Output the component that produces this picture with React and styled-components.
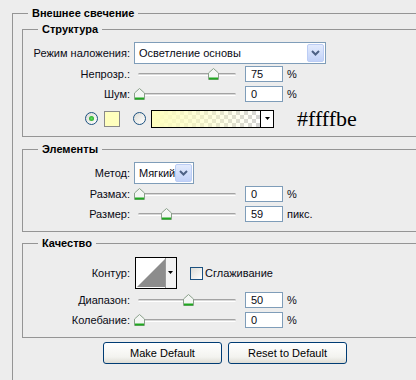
import React from 'react';
import styled, { createGlobalStyle } from 'styled-components';

const GlobalStyle = createGlobalStyle`
  html, body {
    margin: 0;
    padding: 0;
    background: #ededed;
    overflow: hidden;
  }
  body {
    font-family: 'Liberation Sans', Arial, sans-serif;
    font-size: 11px;
    color: #0a0a14;
  }
`;

const Page = styled.div`
  width: 416px;
  height: 380px;
  overflow: hidden;
  box-sizing: border-box;
  padding: 6px 0 0 12px;
`;

const Group = styled.fieldset`
  box-sizing: border-box;
  min-width: 0;
  width: ${props => (props.$w ? props.$w + 'px' : 'auto')};
  margin: ${props => props.$mt || 0}px 0 0 0;
  padding: ${props => props.$pt || 0}px 0 ${props => props.$pb || 0}px ${props => props.$pl || 0}px;
  border: 1px solid #959595;
`;

const Legend = styled.legend`
  margin-left: ${props => props.$ml}px;
  padding: 0 4px;
  font-weight: bold;
  font-size: 11px;
  line-height: 14px;
  color: #000;
`;

const Row = styled.div`
  display: flex;
  align-items: center;
  height: ${props => props.$h || 20}px;
  margin-top: ${props => props.$mt || 0}px;
  padding-left: ${props => props.$pl || 0}px;
`;

const Label = styled.span`
  width: 107px;
  margin-right: 4px;
  text-align: right;
  white-space: nowrap;
`;

const SelectBox = styled.div`
  box-sizing: border-box;
  width: ${props => props.$w}px;
  height: 22px;
  display: flex;
  align-items: center;
  justify-content: space-between;
  background: #fff;
  border: 1px solid #7f9db9;
  padding: 0 1px 0 4px;
  white-space: nowrap;
`;

const ArrowButton = styled.div`
  box-sizing: border-box;
  width: 17px;
  height: 18px;
  display: flex;
  align-items: center;
  justify-content: center;
  border: 1px solid #bccdf5;
  border-radius: 2px;
  background: linear-gradient(#e3ebfd, #c2d2f8);
`;

const SliderWrap = styled.div`
  position: relative;
  width: 106px;
  height: 20px;
`;

const Track = styled.div`
  position: absolute;
  left: 4px;
  right: 4px;
  top: 9px;
  height: 1px;
  border-top: 1px solid #a3a3a3;
  border-bottom: 1px solid #fff;
  background: #d8d8d8;
  border-radius: 2px;
`;

const Thumb = styled.svg`
  position: absolute;
  top: 4px;
`;

const NumberBox = styled.div`
  box-sizing: border-box;
  width: 38px;
  height: 16px;
  margin-left: 5px;
  padding-left: 5px;
  line-height: 14px;
  background: #fff;
  border: 1px solid #7f9db9;
`;

const Unit = styled.span`
  margin-left: 4px;
`;

const Radio = styled.span`
  box-sizing: border-box;
  width: 13px;
  height: 13px;
  border-radius: 50%;
  border: 1px solid #1c5180;
  background: linear-gradient(135deg, #dcdcd6, #fff);
  display: flex;
  align-items: center;
  justify-content: center;
  margin-left: ${props => props.$ml || 0}px;

  &::after {
    content: '';
    display: ${props => (props.$on ? 'block' : 'none')};
    width: 5px;
    height: 5px;
    border-radius: 50%;
    background: radial-gradient(#5ee05e, #1c9a1c);
  }
`;

const Swatch = styled.span`
  box-sizing: border-box;
  width: 16px;
  height: 16px;
  margin-left: 6px;
  background: #ffffbe;
  border: 1px solid #8a8a8a;
`;

const GradientBox = styled.div`
  box-sizing: border-box;
  width: 123px;
  height: 18px;
  margin-left: 5px;
  display: flex;
  border: 1px solid #000;
`;

const GradientFill = styled.div`
  flex: 1;
  background:
    linear-gradient(to right, #ffffbe 0%, rgba(255, 255, 190, 0.6) 45%, rgba(255, 255, 190, 0) 100%),
    repeating-conic-gradient(#d4d4d4 0% 25%, #fff 0% 50%) 0 0 / 8px 8px;
`;

const DropPart = styled.div`
  width: 12px;
  display: flex;
  align-items: center;
  justify-content: center;
  border-left: 1px solid #000;
  background: #fff;
`;

const Hex = styled.span`
  margin-left: 23px;
  font-family: 'Liberation Serif', 'Times New Roman', serif;
  font-size: 22px;
  color: #000;
`;

const ContourPick = styled.svg`
  margin-left: 1px;
`;

const CheckBox = styled.span`
  box-sizing: border-box;
  width: 13px;
  height: 13px;
  margin-left: 13px;
  border: 1px solid #1c5180;
  background: linear-gradient(135deg, #dcdcd6, #fff);
`;

const CheckLabel = styled.span`
  margin-left: 2px;
`;

const ButtonBar = styled.div`
  display: flex;
  gap: 6px;
  margin: 4px 0 0 81px;
`;

const Button = styled.button`
  box-sizing: border-box;
  width: 119px;
  height: 22px;
  padding: 0;
  font-family: 'Liberation Sans', Arial, sans-serif;
  font-size: 11px;
  color: #000;
  border: 1px solid #003c74;
  border-radius: 3px;
  background: linear-gradient(#ffffff, #f3f3ef 70%, #dedcd4);
`;

const Chevron = () => (
  <svg width="9" height="6" viewBox="0 0 9 6">
    <path d="M1 1 L4.5 4.5 L8 1" fill="none" stroke="#4d6185" strokeWidth="2" />
  </svg>
);

const DownTriangle = () => (
  <svg width="5" height="3" viewBox="0 0 5 3">
    <path d="M0 0 H5 L2.5 3 Z" fill="#000" />
  </svg>
);

const Select = ({ width, value }) => (
  <SelectBox $w={width}>
    <span>{value}</span>
    <ArrowButton>
      <Chevron />
    </ArrowButton>
  </SelectBox>
);

const Slider = ({ pos }) => (
  <SliderWrap>
    <Track />
    <Thumb width="11" height="12" viewBox="0 0 11 12" style={{ left: Math.round(pos * 98) }}>
      <path d="M0.5 11.5 V5 L5.5 0.5 L10.5 5 V11.5 Z" fill="#f4f6f4" stroke="#8aa08a" />
      <rect x="1" y="9.5" width="9" height="2" fill="#1fa81f" />
    </Thumb>
  </SliderWrap>
);

const SliderRow = ({ label, pos, value, unit, mt }) => (
  <Row $mt={mt}>
    <Label>{label}</Label>
    <Slider pos={pos} />
    <NumberBox>{value}</NumberBox>
    <Unit>{unit}</Unit>
  </Row>
);

export default function App() {
  return (
    <Page>
      <GlobalStyle />
      <Group $w={470} $pt={2} $pl={9} $pb={40}>
        <Legend $ml={6}>Внешнее свечение</Legend>

        <Group $pt={6} $pb={3}>
          <Legend $ml={15}>Структура</Legend>
          <Row $h={22}>
            <Label>Режим наложения:</Label>
            <Select width={192} value="Осветление основы" />
          </Row>
          <SliderRow label="Непрозр.:" pos={0.75} value="75" unit="%" />
          <SliderRow label="Шум:" pos={0} value="0" unit="%" />
          <Row $h={29} $pl={62}>
            <Radio $on />
            <Swatch />
            <Radio $ml={13} />
            <GradientBox>
              <GradientFill />
              <DropPart>
                <DownTriangle />
              </DropPart>
            </GradientBox>
            <Hex>#ffffbe</Hex>
          </Row>
        </Group>

        <Group $mt={5} $pt={6} $pb={7}>
          <Legend $ml={15}>Элементы</Legend>
          <Row $h={22}>
            <Label>Метод:</Label>
            <Select width={60} value="Мягкий" />
          </Row>
          <SliderRow label="Размах:" pos={0} value="0" unit="%" />
          <SliderRow label="Размер:" pos={0.28} value="59" unit="пикс." />
        </Group>

        <Group $mt={4} $pt={7} $pb={7}>
          <Legend $ml={15}>Качество</Legend>
          <Row $h={32}>
            <Label>Контур:</Label>
            <ContourPick width="42" height="32" viewBox="0 0 42 32">
              <rect x="0.5" y="0.5" width="41" height="31" fill="#f2f2f2" stroke="#000" />
              <rect x="1" y="1" width="29" height="30" fill="#fff" />
              <path d="M2 30 L30 2 V30 Z" fill="#8c8c8c" />
              <line x1="30.5" y1="1" x2="30.5" y2="31" stroke="#9a9a9a" />
              <path d="M33 14 H38 L35.5 17 Z" fill="#000" />
            </ContourPick>
            <CheckBox />
            <CheckLabel>Сглаживание</CheckLabel>
          </Row>
          <SliderRow label="Диапазон:" pos={0.5} value="50" unit="%" mt={1} />
          <SliderRow label="Колебание:" pos={0} value="0" unit="%" />
        </Group>

        <ButtonBar>
          <Button>Make Default</Button>
          <Button>Reset to Default</Button>
        </ButtonBar>
      </Group>
    </Page>
  );
}
